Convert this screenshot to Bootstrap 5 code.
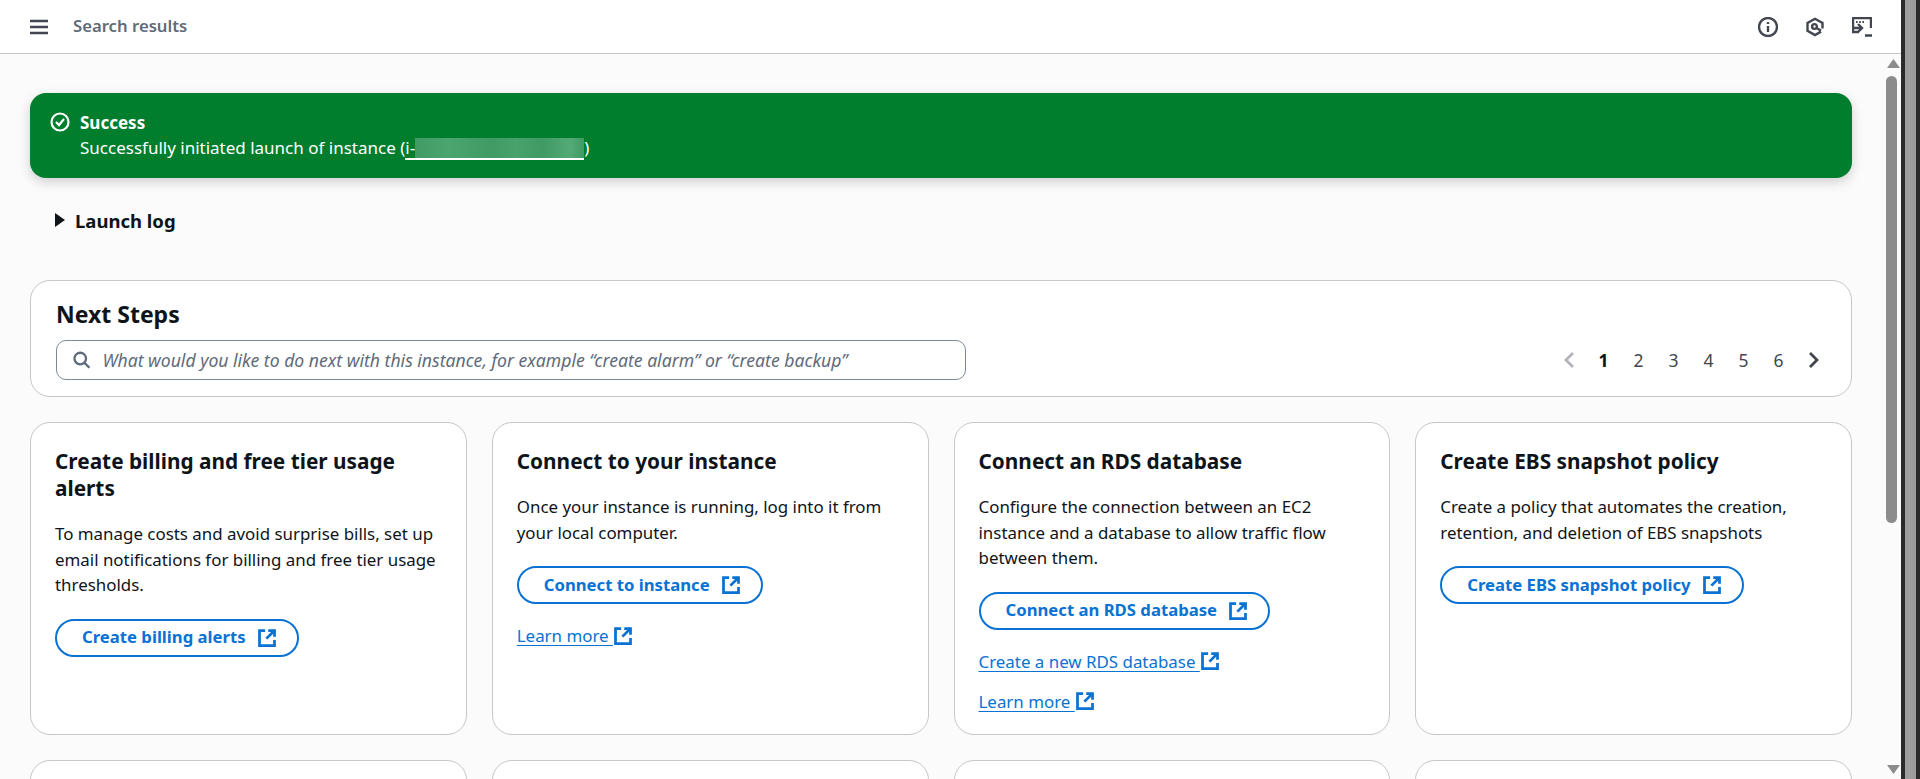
<!DOCTYPE html>
<html lang="en">
<head>
<meta charset="utf-8">
<title>Launch an instance</title>
<link href="https://cdn.jsdelivr.net/npm/bootstrap@5.3.0/dist/css/bootstrap.min.css" rel="stylesheet">
<style>
html,body{height:779px;overflow:hidden}
body{font-family:"Noto Sans","Open Sans",sans-serif;font-size:16.9px;line-height:25px;color:#0f141a;background:#fbfbfb}
.topbar{height:54px;background:#fff;border-bottom:1px solid #c6c6cd;padding:0 29px 0 30px;flex:none}
.crumb{font-size:16.7px;font-weight:600;color:#5f6b7a;margin-left:25px;padding-bottom:2px}
.top-icons{gap:27px}
.ic{stroke:#424650;fill:none;stroke-width:2.4}
.main-wrap{min-height:0}
.main{padding:39px 34px 0 30px;min-width:0}
.flash{height:85px;background:#007e2e;color:#fff;border-radius:16px;padding:12px 20px;box-shadow:0 4px 12px rgba(0,7,22,.18);font-size:17px}
.flash-icon{margin-top:7px}
.flash .row-txt{line-height:25px;padding-top:5px;margin-left:2px}
.mask{display:inline-block;width:169px;height:20px;vertical-align:-4px;background:linear-gradient(90deg,#3f9a63,#4ba56f 20%,#3f9a63 45%,#48a26c 60%,#3f9a63 75%,#53aa76 92%,#3f9a63)}
.inst{color:#fff;text-decoration:none;border-bottom:2px solid #fff;display:inline-block;line-height:20px}
.logline{height:102px;padding:0 0 18px 25px;font-size:18.5px;font-weight:700;gap:10px}
.panel{background:#fff;border:1px solid #c6c6cd;border-radius:20px}
.next{height:117px;padding:18px 20px 0 25px}
.next h2{font-size:23px;font-weight:700;line-height:30px;margin:0 0 11px}
.searchbox{width:910px;height:40px;border:1px solid #7d8998;border-radius:10px;padding:0 16px;gap:12px;background:#fff}
.searchbox input{border:0;outline:0;background:transparent;font-style:italic;font-size:17.6px;color:#5f6b7a;width:100%;padding:0}
.searchbox input::placeholder{color:#5f6b7a;opacity:1}
.pager span{width:35px;text-align:center;color:#424650;font-size:17.5px}
.pager span.cur{font-weight:700;color:#0f141a}
.grid-cards{display:grid;grid-template-columns:repeat(4,1fr);gap:25px;margin-top:25px}
.tile{height:313px;padding:25px 24px 0;display:flex;flex-direction:column;align-items:flex-start}
.tile > *{flex:none}
.tile h3{font-size:20.8px;font-weight:700;line-height:27px;margin:0 0 19px}
.tile p{margin:0 0 21px;line-height:25.5px}
.pill{border:2px solid #0972d3;border-radius:20px;color:#0972d3;font-weight:700;font-size:16.7px;height:38px;padding:0 20px 0 25px;display:inline-flex;align-items:center;gap:11px;text-decoration:none;background:#fff;line-height:1}
.ext{stroke:#0972d3;fill:none;stroke-width:2.2;flex:none}
.lnk{margin-top:19px;display:inline-flex;align-items:center;color:#0972d3;line-height:25px;text-decoration:none}
.lnk u{text-underline-offset:3px}
.lnk + .lnk{margin-top:15px}
.stub{height:60px}
.sbar{width:15px;flex:none;padding:5px 0 5px}
.tri-u{width:13px;height:9px;margin:0 auto;clip-path:polygon(50% 0,100% 100%,0 100%);background:#8c8c8c}
.tri-d{width:13px;height:9px;margin:0 auto;clip-path:polygon(0 0,100% 0,50% 100%);background:#8c8c8c}
.thumb{width:11px;height:447px;margin:8px 0 auto 0;background:#8c8c8c;border-radius:6px}
.outer{width:19px;flex:none;background:#9e9e9e;border-left:4px solid #2b2b2b;border-right:4px solid #2b2b2b}
</style>
</head>
<body class="d-flex">
<div class="flex-grow-1 d-flex flex-column" style="min-width:0">
  <header class="topbar d-flex align-items-center">
    <svg width="18" height="16" viewBox="0 0 18 16" class="ic"><path d="M0 2h18M0 8h18M0 14h18"/></svg>
    <span class="crumb">Search results</span>
    <div class="ms-auto d-flex align-items-center top-icons">
      <svg width="20" height="20" viewBox="0 0 20 20" class="ic"><circle cx="10" cy="10" r="9"/><path d="M10 9v6M10 5v2"/></svg>
      <svg width="20" height="20" viewBox="0 0 20 20" class="ic"><path d="M16 14.6L10 18l-7.5-4.2V6L10 1.8 17.5 6v5.5"/><circle cx="9.5" cy="9.5" r="2.4"/><path d="M11.5 11l4.5 2.6"/></svg>
      <svg width="20" height="20" viewBox="0 0 20 20" class="ic"><path d="M7 15H1V1h18v10"/><path d="M4 5h1.6M7.2 5h1.6M10.4 5h1.6" stroke-width="2"/><path d="M6 7l4 4-4 4M2 11h7M13 18.5h7"/></svg>
    </div>
  </header>
  <div class="main-wrap d-flex flex-grow-1">
    <main class="main flex-grow-1 overflow-hidden">
      <div class="flash d-flex gap-2">
        <svg width="20" height="20" viewBox="0 0 20 20" fill="none" stroke="#fff" stroke-width="2.2" class="flex-none flash-icon"><circle cx="10" cy="10" r="8.5"/><path d="M6 10l3 3 5-6"/></svg>
        <div class="row-txt"><div class="fw-bold">Success</div><div>Successfully initiated launch of instance (<a class="inst" href="#">i-<span class="mask"></span></a>)</div></div>
      </div>
      <div class="logline d-flex align-items-center">
        <svg width="10" height="14" viewBox="0 0 10 14"><path d="M0 0l10 7-10 7z" fill="#0f141a"/></svg>
        <span>Launch log</span>
      </div>
      <section class="panel next">
        <h2>Next Steps</h2>
        <div class="d-flex align-items-center justify-content-between">
          <div class="searchbox d-flex align-items-center">
            <svg width="18" height="18" viewBox="0 0 18 18" fill="none" stroke="#5f6b7a" stroke-width="2.4" class="flex-none"><circle cx="7.5" cy="7.5" r="6"/><path d="M12 12l5 5"/></svg>
            <input type="text" placeholder="What would you like to do next with this instance, for example “create alarm” or “create backup”">
          </div>
          <div class="pager d-flex align-items-center">
            <svg width="35" height="20" viewBox="0 0 35 20" fill="none" stroke="#b4b4bb" stroke-width="2.8"><path d="M22 3l-7 7 7 7"/></svg>
            <span class="cur">1</span><span>2</span><span>3</span><span>4</span><span>5</span><span>6</span>
            <svg width="35" height="20" viewBox="0 0 35 20" fill="none" stroke="#424650" stroke-width="2.8"><path d="M14 3l7 7-7 7"/></svg>
          </div>
        </div>
      </section>
      <div class="grid-cards">
        <article class="panel tile">
          <h3>Create billing and free tier usage alerts</h3>
          <p>To manage costs and avoid surprise bills, set up email notifications for billing and free tier usage thresholds.</p>
          <a href="#" class="pill">Create billing alerts <svg width="20" height="20" viewBox="0 0 16 16" class="ext"><use href="#x"/></svg></a>
        </article>
        <article class="panel tile">
          <h3>Connect to your instance</h3>
          <p>Once your instance is running, log into it from your local computer.</p>
          <a href="#" class="pill">Connect to instance <svg width="20" height="20" viewBox="0 0 16 16" class="ext"><use href="#x"/></svg></a>
          <a href="#" class="lnk"><u>Learn more&nbsp;</u><svg width="20" height="20" viewBox="0 0 16 16" class="ext"><use href="#x"/></svg></a>
        </article>
        <article class="panel tile">
          <h3>Connect an RDS database</h3>
          <p>Configure the connection between an EC2 instance and a database to allow traffic flow between them.</p>
          <a href="#" class="pill">Connect an RDS database <svg width="20" height="20" viewBox="0 0 16 16" class="ext"><use href="#x"/></svg></a>
          <a href="#" class="lnk"><u>Create a new RDS database&nbsp;</u><svg width="20" height="20" viewBox="0 0 16 16" class="ext"><use href="#x"/></svg></a>
          <a href="#" class="lnk"><u>Learn more&nbsp;</u><svg width="20" height="20" viewBox="0 0 16 16" class="ext"><use href="#x"/></svg></a>
        </article>
        <article class="panel tile">
          <h3>Create EBS snapshot policy</h3>
          <p>Create a policy that automates the creation, retention, and deletion of EBS snapshots</p>
          <a href="#" class="pill">Create EBS snapshot policy <svg width="20" height="20" viewBox="0 0 16 16" class="ext"><use href="#x"/></svg></a>
        </article>
        <article class="panel stub"></article><article class="panel stub"></article><article class="panel stub"></article><article class="panel stub"></article>
      </div>
    </main>
    <div class="sbar d-flex flex-column">
      <div class="tri-u"></div>
      <div class="thumb"></div>
      <div class="tri-d"></div>
    </div>
  </div>
</div>
<div class="outer"></div>
<svg width="0" height="0" class="d-block" aria-hidden="true"><defs><g id="x"><path d="M6.5 2H2v12h12V9.5"/><path d="M9 2h5v5"/><path d="M14 2L7.5 8.5"/></g></defs></svg>
<script src="https://cdn.jsdelivr.net/npm/bootstrap@5.3.0/dist/js/bootstrap.bundle.min.js"></script>
</body>
</html>
